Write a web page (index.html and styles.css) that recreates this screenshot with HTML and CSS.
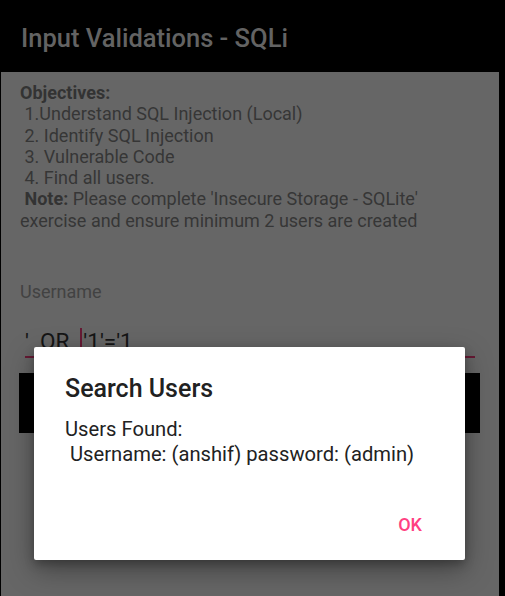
FILE: index.html
```html
<!DOCTYPE html>
<html>
<head>
<meta charset="utf-8">
<link rel="stylesheet" href="styles.css">
</head>
<body>
<div class="screen">
  <header class="appbar"><h1 class="title">Input Validations - SQLi</h1></header>
  <main class="content">
    <div class="objectives">
      <div><b>Objectives:</b></div>
      <div>&nbsp;1.Understand SQL Injection (Local)</div>
      <div>&nbsp;2. Identify SQL Injection</div>
      <div>&nbsp;3. Vulnerable Code</div>
      <div>&nbsp;4. Find all users.</div>
      <div>&nbsp;<b>Note:</b> Please complete 'Insecure Storage - SQLite'</div>
      <div>exercise and ensure minimum 2 users are created</div>
    </div>
    <div class="field">
      <div class="label">Username</div>
      <div class="input"><span>'</span><span class="or">OR</span><span class="cursor"></span><span>'1'='1</span></div>
      <div class="underline"></div>
    </div>
    <div class="button"></div>
  </main>
  <div class="dialog">
    <h2 class="dtitle">Search Users</h2>
    <div class="dmsg">Users Found:<br>&nbsp;Username: (anshif) password: (admin)</div>
    <div class="dactions"><span class="ok">OK</span></div>
  </div>
</div>
</body>
</html>
```

FILE: styles.css
```css
html, body {
  margin: 0;
  padding: 0;
  background: #000;
}
.screen {
  position: relative;
  width: 505px;
  height: 596px;
  overflow: hidden;
  font-family: Roboto, "Noto Sans", sans-serif;
}
.appbar {
  height: 72px;
  display: flex;
  align-items: center;
  padding-left: 21px;
  padding-top: 4px;
  box-sizing: border-box;
}
.title {
  margin: 0;
  font-size: 25.5px;
  font-weight: 500;
  color: #636363;
}
.content {
  margin-left: 1px;
  width: 498px;
  height: 524px;
  background: #666;
  box-sizing: border-box;
  padding: 10px 19px 0 19px;
}
.objectives {
  font-size: 18px;
  line-height: 21.3px;
  color: #363636;
}
.objectives b {
  color: #333;
  font-weight: 700;
}
.field {
  margin-top: 51px;
}
.label {
  font-size: 18px;
  line-height: 20px;
  color: #424242;
}
.input {
  margin-top: 26px;
  padding-left: 5px;
  font-size: 22.5px;
  line-height: 26px;
  color: #151515;
  display: flex;
  align-items: center;
  white-space: pre;
}
.or {
  margin-left: 11px;
}
.cursor {
  display: inline-block;
  width: 2px;
  height: 25px;
  background: #661a34;
  margin: -2px 1px 0 11px;
}
.underline {
  margin: 2px 5px 0 5px;
  height: 2px;
  background: #661a34;
}
.button {
  margin-top: 15px;
  margin-left: -1px;
  width: 461px;
  height: 60px;
  background: #000;
}
.dialog {
  position: absolute;
  left: 34px;
  top: 347px;
  width: 431px;
  height: 213px;
  background: #fff;
  border-radius: 2px;
  box-shadow: 0 10px 28px rgba(0,0,0,0.35), 0 4px 10px rgba(0,0,0,0.25);
  box-sizing: border-box;
  padding: 27px 31px 0 31px;
}
.dtitle {
  margin: 0;
  font-size: 25px;
  font-weight: 500;
  line-height: 30px;
  color: #212121;
}
.dmsg {
  margin-top: 13px;
  font-size: 20.2px;
  line-height: 25px;
  color: #222;
}
.dactions {
  margin-top: 46px;
  display: flex;
  justify-content: flex-end;
  padding-right: 12px;
}
.ok {
  font-size: 18px;
  font-weight: 500;
  color: #ff4081;
  line-height: 24px;
}
```
